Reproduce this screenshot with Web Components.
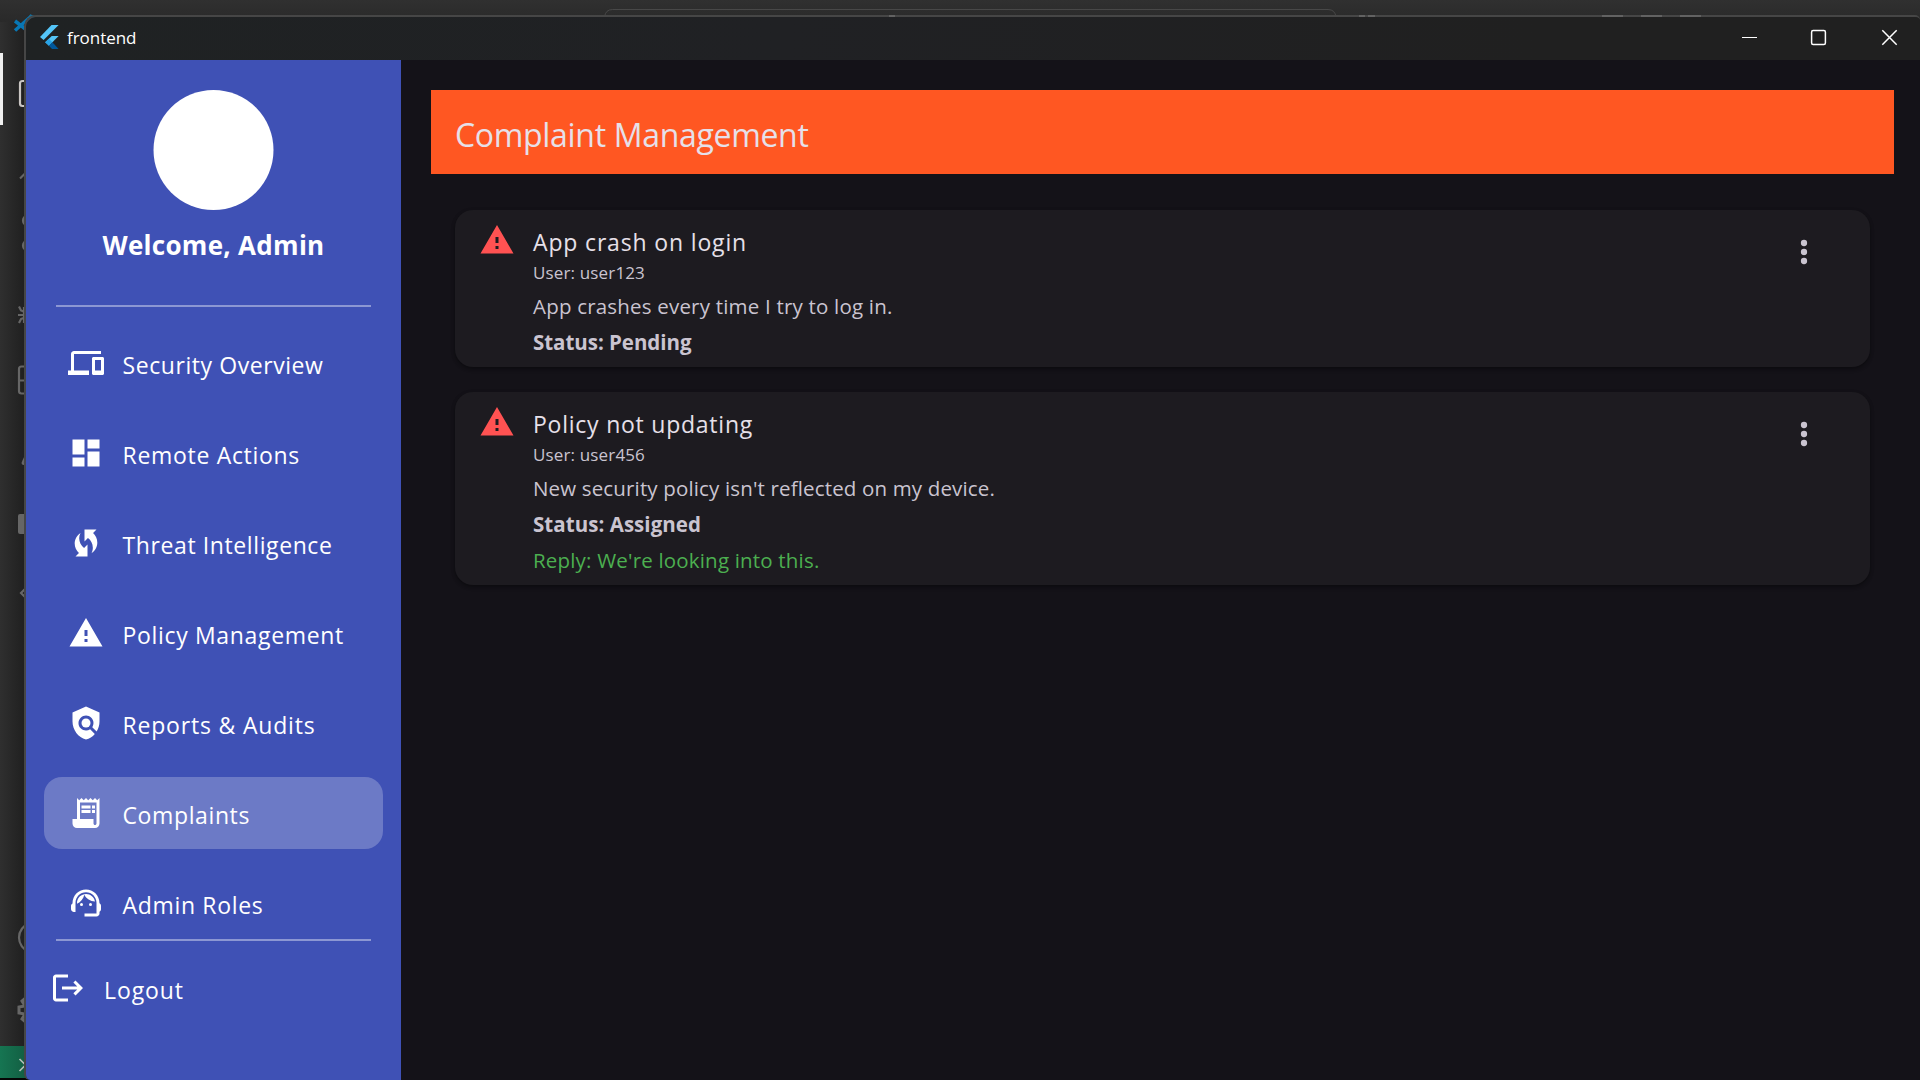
<!DOCTYPE html>
<html lang="en">
<head>
<meta charset="utf-8">
<title>frontend</title>
<style>
html,body{margin:0;height:100%;overflow:hidden;background:#2b2b2b}
body{font-family:"Open Sans","Noto Sans",sans-serif;color:#fff}
</style>
</head>
<body>
<desk-top>
  <editor-backdrop></editor-backdrop>
  <app-window caption="frontend">
    <side-bar slot="side" greeting="Welcome, Admin" greeting-width="222">
      <nav-item icon="devices" width="201">Security Overview</nav-item>
      <nav-item icon="dashboard" width="177.5">Remote Actions</nav-item>
      <nav-item icon="sync" width="210">Threat Intelligence</nav-item>
      <nav-item icon="warning" width="221.5">Policy Management</nav-item>
      <nav-item icon="policy" width="193">Reports &amp; Audits</nav-item>
      <nav-item icon="receipt" width="127.5" selected>Complaints</nav-item>
      <nav-item icon="agent" width="141">Admin Roles</nav-item>
      <nav-item slot="foot" icon="logout" width="80" class="out">Logout</nav-item>
    </side-bar>
    <complaint-page heading="Complaint Management" heading-width="353.5">
      <complaint-card>
        <ui-text slot="title" size="23" width="214">App crash on login</ui-text>
        <ui-text slot="user" size="17" width="112">User: user123</ui-text>
        <ui-text slot="body" size="20.5" width="359.5">App crashes every time I try to log in.</ui-text>
        <ui-text slot="status" size="20.5" weight="700" width="158.5">Status: Pending</ui-text>
      </complaint-card>
      <complaint-card>
        <ui-text slot="title" size="23" width="220">Policy not updating</ui-text>
        <ui-text slot="user" size="17" width="112">User: user456</ui-text>
        <ui-text slot="body" size="20.5" width="462">New security policy isn't reflected on my device.</ui-text>
        <ui-text slot="status" size="20.5" weight="700" width="168">Status: Assigned</ui-text>
        <ui-text slot="reply" size="20.5" width="286.5">Reply: We're looking into this.</ui-text>
      </complaint-card>
    </complaint-page>
  </app-window>
</desk-top>

<script>
const ICONS = {
  devices:'<path d="M4 6h18V4H4c-1.1 0-2 .9-2 2v11H0v3h14v-3H4V6zm19 2h-6c-.55 0-1 .45-1 1v10c0 .55.45 1 1 1h6c.55 0 1-.45 1-1V9c0-.55-.45-1-1-1zm-1 9h-4v-7h4v7z"/>',
  dashboard:'<path d="M3 13h8V3H3v10zm0 8h8v-6H3v6zm10 0h8V11h-8v10zm0-18v6h8V3h-8z"/>',
  sync:'<path d="M16.71 5.29 19 3h-8v8l2.3-2.3c1.97 1.46 3.25 3.78 3.25 6.42 0 1.31-.32 2.54-.88 3.63 2.33-1.52 3.87-4.14 3.87-7.12 0-2.52-1.11-4.77-2.83-6.34z"/><path d="M7.46 8.88c0-1.31.32-2.54.88-3.63C6 6.77 4.46 9.39 4.46 12.37c0 2.52 1.1 4.77 2.84 6.34L5 21h8v-8l-2.3 2.3c-1.96-1.46-3.24-3.78-3.24-6.42z"/>',
  warning:'<path d="M1 21h22L12 2 1 21zm12-3h-2v-2h2v2zm0-4h-2v-4h2v4z"/>',
  policy:'<path d="M21 5l-9-4-9 4v6c0 5.55 3.84 10.74 9 12 2.3-.56 4.33-1.9 5.88-3.71l-3.12-3.12c-1.94 1.29-4.58 1.07-6.29-.64-1.95-1.95-1.95-5.12 0-7.07 1.95-1.95 5.12-1.95 7.07 0 1.71 1.71 1.92 4.35.64 6.29l2.9 2.9C20.29 15.69 21 13.38 21 11V5z"/><circle cx="12" cy="12" r="3"/>',
  receipt:'<path d="M19.5 3.5L18 2l-1.5 1.5L15 2l-1.5 1.5L12 2l-1.5 1.5L9 2 7.5 3.5 6 2v14H3v3c0 1.66 1.34 3 3 3h12c1.66 0 3-1.34 3-3V2l-1.5 1.5zM19 19c0 .55-.45 1-1 1s-1-.45-1-1v-3H8V5h11v14z"/><path d="M9 7h6v2H9zM16 7h2v2h-2zM9 10h6v2H9zM16 10h2v2h-2z"/>',
  agent:'<path d="M21 12.22C21 6.73 16.74 3 12 3c-4.69 0-9 3.65-9 9.28-.6.34-1 .98-1 1.72v2c0 1.1.9 2 2 2h1v-6.1c0-3.87 3.13-7 7-7s7 3.13 7 7V19h-8v2h8c1.1 0 2-.9 2-2v-1.22c.59-.31 1-.92 1-1.64v-2.3c0-.7-.41-1.31-1-1.62z"/><circle cx="9" cy="13" r="1"/><circle cx="15" cy="13" r="1"/><path d="M18 11.03C17.52 8.18 15.04 6 12.05 6c-3.03 0-6.29 2.51-6.03 6.45 2.47-1.01 4.33-3.21 4.86-5.89 1.31 2.63 4 4.44 7.12 4.47z"/>',
  logout:'<path d="M17 7l-1.41 1.41L18.17 11H8v2h10.17l-2.58 2.58L17 17l5-5zM4 5h8V3H4c-1.1 0-2 .9-2 2v14c0 1.1.9 2 2 2h8v-2H4V5z"/>',
  more:'<circle cx="12" cy="6" r="2.1"/><circle cx="12" cy="12" r="2.1"/><circle cx="12" cy="18" r="2.1"/>'
};

class Base extends HTMLElement {
  constructor(){ super(); this.attachShadow({mode:'open'}); }
  attr(n){ return this.getAttribute(n) || ''; }
  connectedCallback(){ this.shadowRoot.innerHTML = this.view(); }
}

/* One line of text, tracked so that it fills a given advance width. */
class UiText extends Base {
  view(){
    return `<style>:host{display:block;white-space:nowrap;font-size:${this.attr('size')}px;font-weight:${this.attr('weight')||400}}
      span{display:inline-block}</style><span><slot></slot></span>`;
  }
  connectedCallback(){
    super.connectedCallback();
    this.fit();
    requestAnimationFrame(() => this.fit());
  }
  fit(){
    const target = +this.attr('width'), span = this.shadowRoot.querySelector('span');
    span.style.letterSpacing = '0';
    const natural = span.getBoundingClientRect().width;
    const n = this.textContent.trim().length;
    if (target && natural) span.style.letterSpacing = ((target - natural) / n).toFixed(3) + 'px';
  }
}
customElements.define('ui-text', UiText);

class UiIcon extends Base {
  view(){
    return `<style>:host{display:block;width:36px;height:36px;flex:none}svg{display:block}</style>
      <svg width="36" height="36" viewBox="0 0 24 24" fill="currentColor">${ICONS[this.attr('name')]}</svg>`;
  }
}
customElements.define('ui-icon', UiIcon);

class NavItem extends Base {
  view(){
    return `<style>
      :host{display:flex;align-items:center;gap:18.5px;height:72px;padding:0 24px;border-radius:18px;box-sizing:border-box;color:#fff}
      :host([selected]){background:rgba(255,255,255,.24)}
      ui-text{line-height:36px;padding-top:4px}
      </style><ui-icon name="${this.attr('icon')}"></ui-icon><ui-text size="23" width="${this.attr('width')}">${this.innerHTML}</ui-text>`;
  }
}
customElements.define('nav-item', NavItem);

class SideBar extends Base {
  view(){
    return `<style>
      :host{display:flex;flex-direction:column;width:375px;flex:none;background:#3f51b5;box-sizing:border-box;padding-top:30px}
      .avatar{display:block;align-self:center;flex:none}
      .hello{align-self:center;line-height:42px;margin-top:14px}
      hr{border:0;height:2px;background:#8c97d3;margin:0 30px;flex:none;width:315px}
      .first{margin-top:39px}
      nav{display:flex;flex-direction:column;gap:18px;padding:20px 18px 0;height:612px;box-sizing:content-box;overflow:hidden}
      footer{padding:11px 0 0}
      ::slotted(.out){padding:0 24px;gap:18px}
      </style>
      <svg class="avatar" width="121" height="120"><circle cx="60.5" cy="60" r="60" fill="#fff"/></svg>
      <ui-text class="hello" size="26" weight="700" width="${this.attr('greeting-width')}">${this.attr('greeting')}</ui-text>
      <hr class="first"><nav><slot></slot></nav><hr><footer><slot name="foot"></slot></footer>`;
  }
}
customElements.define('side-bar', SideBar);

class ComplaintCard extends Base {
  view(){
    return `<style>
      :host{display:flex;align-items:flex-start;border-radius:18px;background:#1d1b20;padding:0 48px 7px 24px;box-shadow:0 2px 4px rgba(0,0,0,.3),0 1px 4px rgba(0,0,0,.15)}
      .warn{color:#ff5252;margin:12px 18px 0 0}
      .copy{display:flex;flex-direction:column;flex:1;padding-top:15px;color:#cac4d0}
      ::slotted([slot=title]){line-height:34px;color:#e6e0e9}
      ::slotted([slot=user]){line-height:26px;margin:1px 0 2px}
      ::slotted([slot=body]),::slotted([slot=status]),::slotted([slot=reply]){line-height:36px}
      ::slotted([slot=reply]){color:#4caf50}
      .more{color:#cac4d0;margin-top:24px}
      </style>
      <ui-icon class="warn" name="warning"></ui-icon>
      <div class="copy"><slot name="title"></slot><slot name="user"></slot><slot name="body"></slot><slot name="status"></slot><slot name="reply"></slot></div>
      <ui-icon class="more" name="more"></ui-icon>`;
  }
}
customElements.define('complaint-card', ComplaintCard);

class ComplaintPage extends Base {
  view(){
    return `<style>
      :host{display:flex;flex-direction:column;flex:1;background:#141218;padding:30px 26px 0 30px}
      header{height:84px;background:#ff5722;color:#e6e0e9;padding-left:24px;display:flex;align-items:center;box-sizing:border-box;line-height:48px}
      header ui-text{padding-top:5px}
      main{display:flex;flex-direction:column;gap:25px;padding:36px 24px 0}
      </style><header><ui-text size="32" width="${this.attr('heading-width')}">${this.attr('heading')}</ui-text></header><main><slot></slot></main>`;
  }
}
customElements.define('complaint-page', ComplaintPage);

class TitleBar extends Base {
  view(){
    return `<style>
      :host{display:flex;align-items:center;height:43px;flex:none;background:linear-gradient(90deg,#1f2223,#202124 40%,#202020 80%);padding-left:14px;box-sizing:border-box}
      .logo{width:19px;height:24px;margin-right:8px;margin-top:-3px}
      ui-text{flex:1;line-height:28px;margin-top:-2px}
      .ctl{display:block;width:71px;height:43px}
      </style>
      <svg class="logo" viewBox="0 0 19 24"><path fill="#54c5f8" d="M11.5 0H18.6L3.6 15 0 12z"/><path fill="#54c5f8" d="M11.7 11H18.6L9 20.7 5.2 17.2z"/><path fill="#29a4e8" d="M5.2 17.2 8.8 13.8 12.4 17.3 8.9 20.8z"/><path fill="#01579b" d="M8.9 20.8 12.4 17.3 18.6 24H12z"/></svg>
      <ui-text size="17" width="69.5">${this.attr('caption')}</ui-text>
      <svg class="ctl" viewBox="0 0 71 43"><path d="M35 20.5h15" stroke="#fff" fill="none"/></svg>
      <svg class="ctl" viewBox="0 0 71 43"><rect x="33.6" y="13.6" width="13.8" height="13.8" rx="1.5" stroke="#fff" stroke-width="1.5" fill="none"/></svg>
      <svg class="ctl" viewBox="0 0 71 43"><path d="M33.3 13.3l14.4 14.4M47.7 13.3L33.3 27.7" stroke="#fff" stroke-width="1.5" fill="none"/></svg>`;
  }
}
customElements.define('title-bar', TitleBar);

class AppWindow extends Base {
  view(){
    return `<style>
      :host{position:absolute;left:24px;top:15px;width:1896px;height:1065px;box-sizing:border-box;border:solid #464646;border-width:2px 0 0 2px;border-radius:12px 5px 0 6px;overflow:hidden;display:flex;flex-direction:column}
      .row{display:flex;flex:1;min-height:0}
      </style><title-bar caption="${this.attr('caption')}"></title-bar><div class="row"><slot name="side"></slot><slot></slot></div>`;
  }
}
customElements.define('app-window', AppWindow);

class EditorBackdrop extends Base {
  view(){
    return `<style>:host{display:block;width:1920px;height:1080px}svg{display:block}</style>
    <svg width="1920" height="1080" fill="none">
      <defs>
        <linearGradient id="t" x2="0" y2="1"><stop stop-color="#303030"/><stop offset="1" stop-color="#272727"/></linearGradient>
        <linearGradient id="l"><stop stop-color="#2f2f2f"/><stop offset="1" stop-color="#1f1f1f"/></linearGradient>
        <linearGradient id="g"><stop stop-color="#167552"/><stop offset="1" stop-color="#125b40"/></linearGradient>
      </defs>
      <rect width="1920" height="30" fill="url(#t)"/>
      <rect y="22" width="26" height="1058" fill="url(#l)"/>
      <path d="M604.5 20v-3q1-7.500 8-7.500H1328q7 0 8 7.500v3" stroke="#484848"/>
      <path d="M15 21l13 10M15 30.500L32 15.500" stroke="#0877b5" stroke-width="3.500"/><path d="M30 14.500l7 2-9 3z" fill="#1d6d96"/>
      <rect y="53" width="3" height="72" fill="#f0f0f0"/>
      <path d="M30 81H22.500q-2.500 0-2.500 2.500v20q0 2.500 2.500 2.500H30" stroke="#c9c5c2" stroke-width="2.200"/>
      <g stroke="#666" stroke-width="2.200">
        <path d="M20 178.500l9-9"/><circle cx="28" cy="220.500" r="5"/><circle cx="28" cy="245.500" r="5"/>
        <path d="M18 315h8M19 306.500l2 4 5 2M19 323l2-4 5-2M24 307v16"/>
        <path d="M30 366.500h-8.500q-2.500 0-2.500 2.500v22q0 2.500 2.500 2.500H30M19 380.500h9"/>
        <path d="M28 451l-5 11q-1 2 1 2h5"/><path d="M27 587l-6 6 6 6"/>
        <path d="M30 922q-11 6-11 15.500T30 953"/>
      </g>
      <rect x="18" y="514" width="14" height="20" rx="2" fill="#666"/>
      <path d="M28 996l-6 5 3 5-6 1v6l6 1-3 5 6 5" stroke="#666" stroke-width="3"/>
      <rect y="1046" width="30" height="32" fill="url(#g)"/><rect y="1078" width="30" height="2" fill="#050505"/>
      <path d="M19.500 1059l6 6-6 6M29 1059l-4 6 4 6" stroke="#b4bdb8" stroke-width="1.700"/>
    </svg>`;
  }
}
customElements.define('editor-backdrop', EditorBackdrop);

/* Tips of editor toolbar glyphs that show through the window's top edge. */
class EdgeGlyphs extends Base {
  view(){
    return `<style>:host{position:absolute;left:0;top:15px}svg{display:block}</style>
      <svg width="1920" height="2"><path d="M889 1h6M1359 1h6M1368 1h7M1602 1h21M1641 1h21M1680 1h21" stroke="#6c6c6c" stroke-width="1.500"/></svg>`;
  }
}
customElements.define('edge-glyphs', EdgeGlyphs);

class DeskTop extends Base {
  view(){ return `<style>:host{display:block;position:relative;width:1920px;height:1080px;overflow:hidden}</style><slot></slot><edge-glyphs></edge-glyphs>`; }
}
customElements.define('desk-top', DeskTop);
</script>
</body>
</html>
